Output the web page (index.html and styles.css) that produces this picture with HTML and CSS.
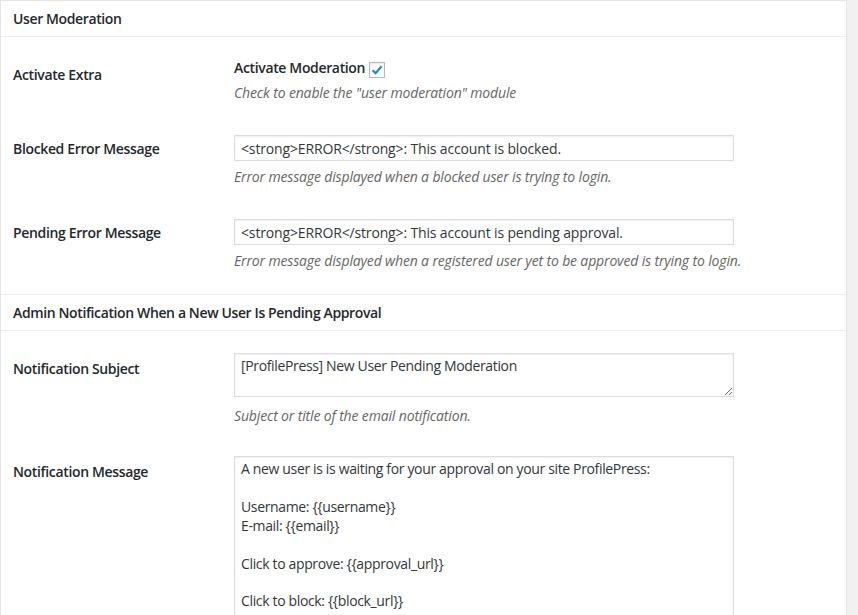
FILE: index.html
```html
<!DOCTYPE html>
<html lang="en">
<head>
    <meta charset="UTF-8">
    <title>User Moderation Settings</title>
    <link rel="stylesheet" href="styles.css">
</head>
<body>

<div class="panel">
    <!-- User Moderation -->
    <div class="section">
        <h3 class="section-title">User Moderation</h3>
        <div class="section-body">
            <div class="row row-check">
                <div class="row-label">Activate Extra</div>
                <div class="row-field">
                    <label class="check-label">Activate Moderation
                        <span class="checkbox">
                            <svg width="16" height="16" viewBox="0 0 16 16"><path d="M3.6 8.2 L6.6 11.2 L12.6 4.2" fill="none" stroke="#1e8cbe" stroke-width="2.2"/></svg>
                        </span>
                    </label>
                    <p class="description">Check to enable the "user moderation" module</p>
                </div>
            </div>

            <div class="row">
                <div class="row-label">Blocked Error Message</div>
                <div class="row-field">
                    <input type="text" class="text-input" value="<strong>ERROR</strong>: This account is blocked.">
                    <p class="description">Error message displayed when a blocked user is trying to login.</p>
                </div>
            </div>

            <div class="row">
                <div class="row-label">Pending Error Message</div>
                <div class="row-field">
                    <input type="text" class="text-input" value="<strong>ERROR</strong>: This account is pending approval.">
                    <p class="description">Error message displayed when a registered user yet to be approved is trying to login.</p>
                </div>
            </div>
        </div>
    </div>

    <!-- Admin Notification -->
    <div class="section">
        <h3 class="section-title">Admin Notification When a New User Is Pending Approval</h3>
        <div class="section-body">
            <div class="row row-area">
                <div class="row-label">Notification Subject</div>
                <div class="row-field">
                    <textarea class="text-area subject">[ProfilePress] New User Pending Moderation</textarea>
                    <p class="description">Subject or title of the email notification.</p>
                </div>
            </div>

            <div class="row row-area">
                <div class="row-label">Notification Message</div>
                <div class="row-field">
                    <textarea class="text-area message">A new user is is waiting for your approval on your site ProfilePress:

Username: {{username}}
E-mail: {{email}}

Click to approve: {{approval_url}}

Click to block: {{block_url}}</textarea>
                </div>
            </div>
        </div>
    </div>
</div>

</body>
</html>
```

FILE: styles.css
```css
/* General Styles */
* {
    box-sizing: border-box;
}

body {
    margin: 0;
    background-color: #f1f1f1;
    font-family: "Open Sans", sans-serif;
    font-size: 14px;
    color: #23282d;
    overflow: hidden;
}

.panel {
    width: 847px;
    background-color: #ffffff;
    border: 1px solid #e5e5e5;
    border-bottom: none;
}

.section-title {
    margin: 0;
    padding: 0 12px;
    height: 36px;
    line-height: 35px;
    font-size: 14px;
    font-weight: 600;
    letter-spacing: -0.38px;
    border-bottom: 1px solid #eeeeee;
}

.section + .section .section-title {
    height: 37px;
    border-top: 1px solid #eeeeee;
}

.section-body {
    padding: 8px 0 7px;
}

/* Rows */
.row {
    display: flex;
    padding-left: 12px;
}

.row-label {
    width: 221px;
    padding-top: 21px;
    line-height: 18px;
    font-weight: 600;
    letter-spacing: -0.35px;
}

.row-field {
    width: 500px;
    padding: 16px 0 17px;
}

.row-check .row-field {
    padding-top: 14px;
}

.row-area .row-field {
    padding-top: 14px;
}

.check-label {
    display: flex;
    align-items: center;
    height: 18px;
    line-height: 18px;
    font-weight: 600;
    letter-spacing: -0.35px;
}

.checkbox {
    display: inline-block;
    width: 16px;
    height: 16px;
    margin-left: 4px;
    margin-top: 3px;
    border: 1px solid #b4b9be;
    background-color: #ffffff;
    box-shadow: inset 0 1px 2px rgba(0, 0, 0, 0.1);
}

.checkbox svg {
    display: block;
    margin: -1px 0 0 -1px;
}

.description {
    margin: 7px 0 0;
    font-size: 14px;
    line-height: 18px;
    font-style: italic;
    letter-spacing: -0.15px;
    white-space: nowrap;
    color: #666666;
}

/* Inputs */
.text-input, .text-area {
    display: block;
    width: 500px;
    margin: 0;
    border: 1px solid #dddddd;
    background-color: #ffffff;
    box-shadow: inset 0 1px 2px rgba(0, 0, 0, 0.07);
    font-family: "Open Sans", sans-serif;
    font-size: 14px;
    color: #32373c;
    outline: none;
}

.text-input {
    height: 26px;
    padding: 0 6px;
    letter-spacing: -0.15px;
}

.text-area {
    padding: 3px 6px;
    line-height: 18.9px;
    letter-spacing: -0.35px;
    resize: vertical;
}

.text-area.subject {
    height: 44px;
}

.row-field .text-area.subject + .description {
    margin-top: 10px;
}

.text-area.message {
    height: 260px;
}
```
